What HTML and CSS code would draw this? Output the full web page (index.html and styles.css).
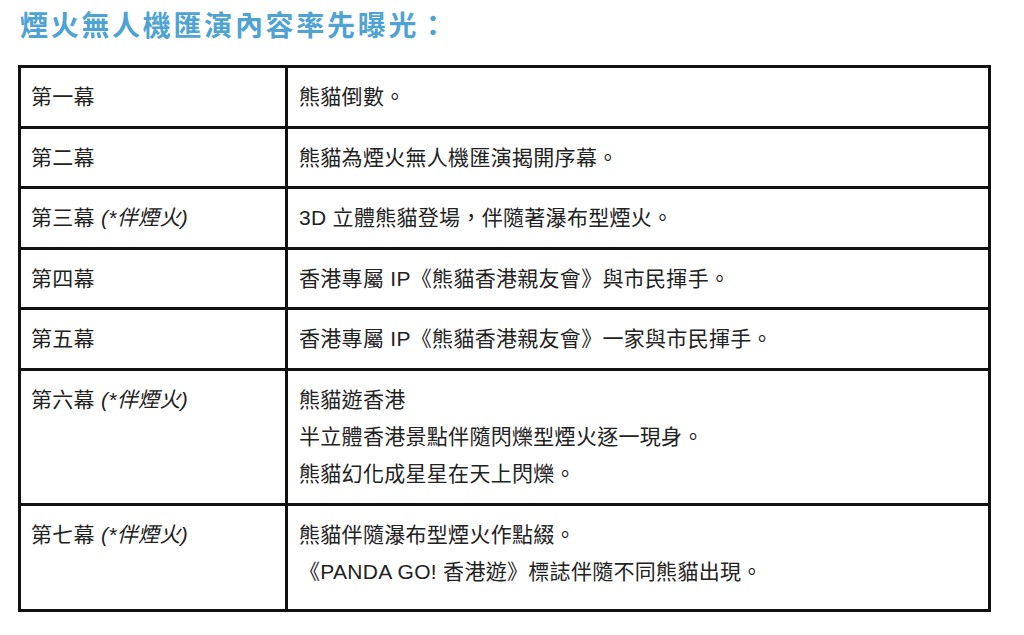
FILE: index.html
```html
<!DOCTYPE html>
<html lang="zh-Hant">
<head>
<meta charset="utf-8">
<title>煙火無人機匯演內容率先曝光</title>
<link rel="stylesheet" href="styles.css">
</head>
<body>
<div class="page">
  <h2 class="title">煙火無人機匯演內容率先曝光：</h2>
  <table class="acts">
    <colgroup>
      <col class="c1">
      <col class="c2">
    </colgroup>
    <tbody>
      <tr><td>第一幕</td><td>熊貓倒數。</td></tr>
      <tr><td>第二幕</td><td>熊貓為煙火無人機匯演揭開序幕。</td></tr>
      <tr><td>第三幕 <em>(*伴煙火)</em></td><td>3D 立體熊貓登場，伴隨著瀑布型煙火。</td></tr>
      <tr><td>第四幕</td><td>香港專屬 IP《熊貓香港親友會》與市民揮手。</td></tr>
      <tr><td>第五幕</td><td>香港專屬 IP《熊貓香港親友會》一家與市民揮手。</td></tr>
      <tr class="r6"><td>第六幕 <em>(*伴煙火)</em></td><td>熊貓遊香港<br>半立體香港景點伴隨閃爍型煙火逐一現身。<br>熊貓幻化成星星在天上閃爍。</td></tr>
      <tr class="r7"><td>第七幕 <em>(*伴煙火)</em></td><td>熊貓伴隨瀑布型煙火作點綴。<br>《PANDA GO! 香港遊》標誌伴隨不同熊貓出現。</td></tr>
    </tbody>
  </table>
</div>
</body>
</html>
```

FILE: styles.css
```css
html, body {
  margin: 0;
  padding: 0;
  background: #ffffff;
}

.page {
  padding: 7px 0 0 18px;
  font-family: "Liberation Sans", "Noto Sans CJK TC", sans-serif;
  color: #222222;
}

.title {
  margin: 0 0 18px 2px;
  font-size: 28px;
  line-height: 40px;
  font-weight: bold;
  letter-spacing: 2.7px;
  color: #4fa3d2;
  font-family: "Liberation Sans", "Noto Sans CJK TC", sans-serif;
}

.acts {
  border-collapse: separate;
  border-spacing: 0;
  border-top: 3px solid #111111;
  border-left: 3px solid #111111;
  width: 973px;
  table-layout: fixed;
  font-size: 21px;
  line-height: 37px;
  letter-spacing: 0.3px;
}

.c1 { width: 267px; }
.c2 { width: 703px; }

.acts td {
  border-right: 3px solid #111111;
  border-bottom: 3px solid #111111;
  padding: 10px 10px 10.5px 10px;
  vertical-align: top;
  text-align: left;
}

.acts td + td {
  padding-left: 11px;
}

.acts em {
  font-style: italic;
}

.r6 td {
  padding-bottom: 11px;
}

.r7 td {
  padding-bottom: 19px;
}
```
